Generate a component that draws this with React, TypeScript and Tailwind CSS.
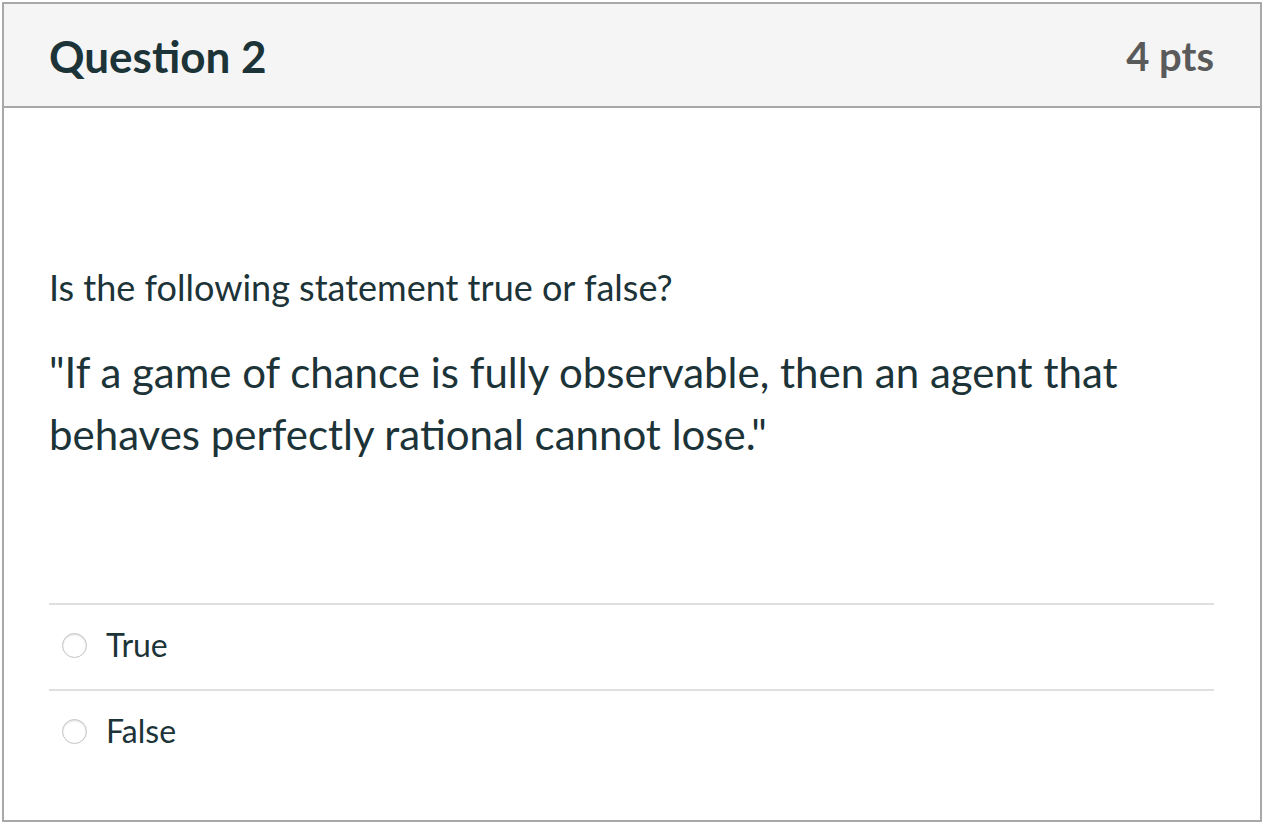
export default function App() {
  const answers = ['True', 'False'];
  return (
    <div className="w-[1264px] h-[824px] bg-white p-[2px] font-['Lato',sans-serif]">
      <div className="h-full border-2 border-[#a8a8a8] flex flex-col">
        <div className="h-[104px] bg-[#f5f5f5] border-b-2 border-[#a8a8a8] flex items-center justify-between pl-[45px] pr-[46px] shrink-0">
          <h2 className="text-[44px] font-bold text-[#1c3338] leading-none pt-[2px]">Question 2</h2>
          <span className="text-[40px] font-bold text-[#5a5a5a] leading-none pt-[2px]">4 pts</span>
        </div>
        <div className="px-[45px] pt-[157px]">
          <p className="text-[36px] text-[#1c3338] leading-[44px]">Is the following statement true or false?</p>
          <p className="mt-[32px] text-[42px] text-[#1c3338] leading-[62px]">
            "If a game of chance is fully observable, then an agent that behaves perfectly rational cannot lose."
          </p>
          <div className="mt-[138px] mr-[1px]">
            {answers.map(a => (
              <div key={a} className="border-t-2 border-[#e0e0e0] h-[86px] flex items-center pl-[13px] pb-[4px]">
                <span className="w-[25px] h-[25px] rounded-full border border-[#c4c4c4] bg-white shadow-[inset_0_1px_2px_rgba(0,0,0,0.14)]" />
                <span className="ml-[19px] text-[32px] text-[#1c3338] leading-none">{a}</span>
              </div>
            ))}
          </div>
        </div>
      </div>
    </div>
  );
}
